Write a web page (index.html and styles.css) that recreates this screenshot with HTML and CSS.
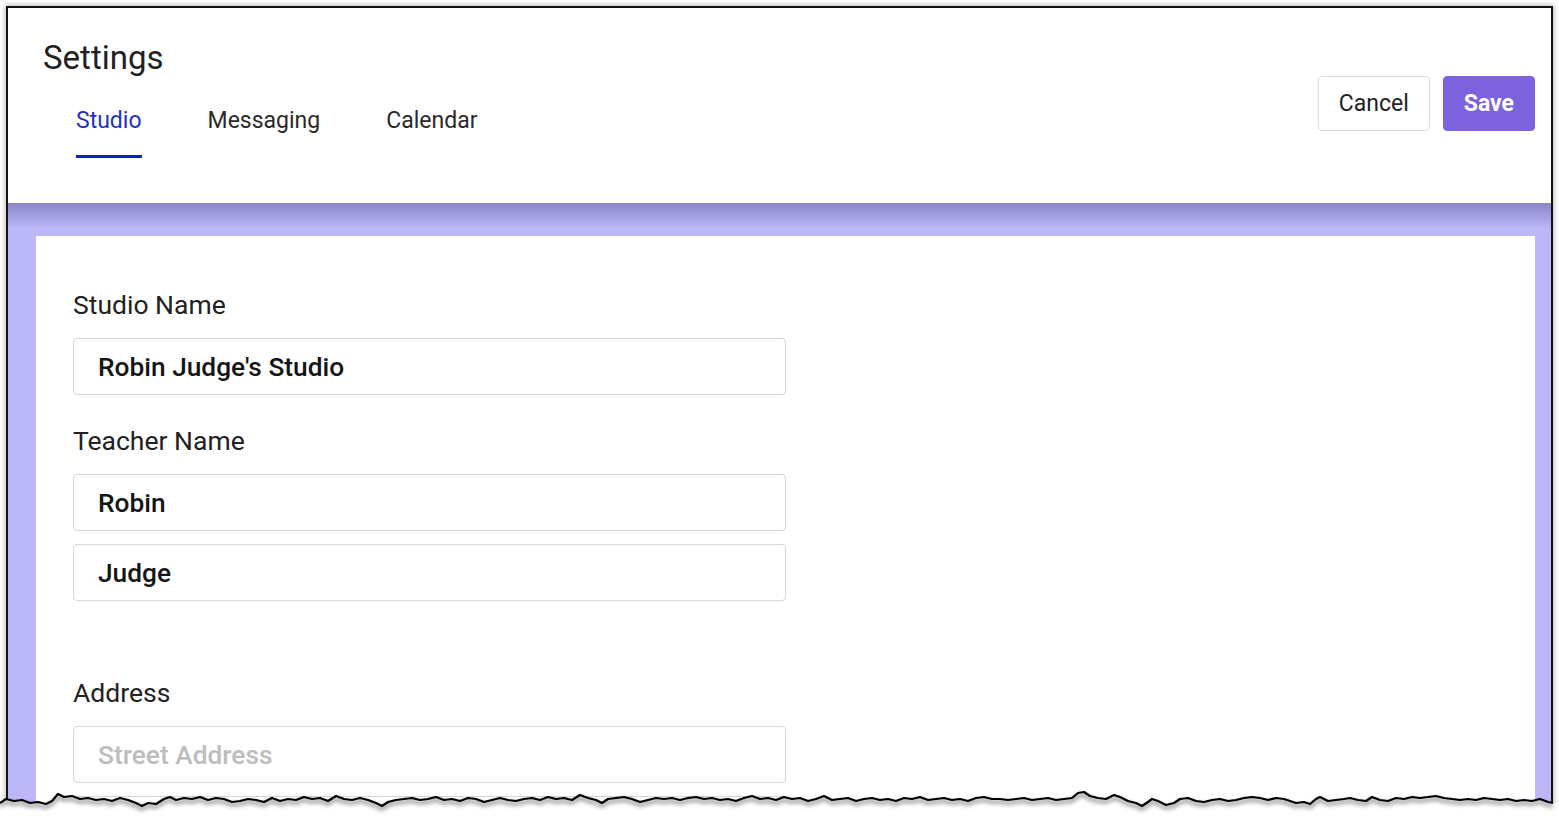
FILE: index.html
```html
<!DOCTYPE html>
<html lang="en">
<head>
<meta charset="utf-8">
<title>Settings</title>
<link rel="stylesheet" href="styles.css">
</head>
<body>
<div class="frame">
  <header class="header">
    <div class="header-left">
      <h1 class="title">Settings</h1>
      <nav class="tabs">
        <a class="tab active">Studio</a>
        <a class="tab">Messaging</a>
        <a class="tab">Calendar</a>
      </nav>
    </div>
    <div class="actions">
      <button class="btn btn-cancel">Cancel</button>
      <button class="btn btn-save">Save</button>
    </div>
  </header>
  <main class="body">
    <section class="card">
      <div class="field">
        <label class="label">Studio Name</label>
        <div class="input">Robin Judge's Studio</div>
      </div>
      <div class="field">
        <label class="label">Teacher Name</label>
        <div class="input">Robin</div>
        <div class="input">Judge</div>
      </div>
      <div class="field field-address">
        <label class="label">Address</label>
        <div class="input placeholder">Street Address</div>
        <div class="input placeholder"></div>
      </div>
    </section>
  </main>
</div>
<svg class="tear" width="1559" height="32" viewBox="0 0 1559 32" xmlns="http://www.w3.org/2000/svg">
  <defs>
    <filter id="blur" x="-5%" y="-50%" width="110%" height="200%">
      <feGaussianBlur stdDeviation="2"/>
    </filter>
  </defs>
  <polygon fill="#ffffff" points="0,17 6,13 14,15 22,14 30,17 38,16 46,18 52,15 58,8 64,11 72,10 80,13 88,12 96,14 104,13 112,15 120,12 128,14 136,17 142,20 148,17 156,18 164,13 170,11 176,14 184,12 192,13 200,11 208,14 216,12 224,13 232,16 240,15 248,13 256,14 264,16 272,12 280,15 288,13 296,14 304,11 312,13 320,12 328,15 336,10 344,13 352,14 360,12 368,14 376,17 382,20 388,16 396,14 404,13 412,12 420,14 428,13 436,11 444,14 452,13 460,15 468,12 476,13 484,16 492,14 500,12 508,14 516,15 524,13 532,12 540,14 548,11 556,13 564,12 572,14 580,9 588,12 596,14 602,17 608,13 616,12 624,11 632,13 640,16 648,14 656,12 664,13 672,12 680,14 688,12 696,11 704,13 712,12 720,14 728,13 736,15 744,12 752,10 760,13 768,12 776,14 784,11 792,13 800,12 808,15 816,13 824,10 832,14 840,13 848,12 856,15 864,13 872,12 880,14 888,13 896,15 904,12 912,13 920,11 928,14 936,13 944,12 952,14 960,13 968,15 976,12 984,11 992,13 1000,13 1008,14 1016,13 1024,12 1032,14 1040,13 1048,12 1056,14 1064,13 1072,12 1078,7 1084,6 1090,10 1098,12 1106,13 1114,9 1120,11 1128,15 1136,17 1142,20 1148,16 1152,13 1158,15 1166,19 1174,17 1180,13 1188,12 1196,15 1204,16 1212,14 1220,13 1228,15 1236,14 1244,12 1252,11 1260,12 1268,14 1276,12 1284,13 1290,15 1296,17 1304,16 1310,18 1316,13 1320,11 1328,15 1336,14 1344,13 1350,12 1358,14 1366,15 1372,11 1380,14 1388,15 1396,12 1404,13 1412,11 1420,12 1428,11 1436,10 1444,12 1452,13 1460,14 1468,13 1476,14 1484,12 1492,13 1500,14 1508,13 1516,15 1524,14 1532,15 1540,13 1548,16 1553,17 1559,17 1559,32 0,32"/>
  <polyline fill="none" stroke="#888" stroke-width="3" filter="url(#blur)" transform="translate(0,3)" points="0,17 6,13 14,15 22,14 30,17 38,16 46,18 52,15 58,8 64,11 72,10 80,13 88,12 96,14 104,13 112,15 120,12 128,14 136,17 142,20 148,17 156,18 164,13 170,11 176,14 184,12 192,13 200,11 208,14 216,12 224,13 232,16 240,15 248,13 256,14 264,16 272,12 280,15 288,13 296,14 304,11 312,13 320,12 328,15 336,10 344,13 352,14 360,12 368,14 376,17 382,20 388,16 396,14 404,13 412,12 420,14 428,13 436,11 444,14 452,13 460,15 468,12 476,13 484,16 492,14 500,12 508,14 516,15 524,13 532,12 540,14 548,11 556,13 564,12 572,14 580,9 588,12 596,14 602,17 608,13 616,12 624,11 632,13 640,16 648,14 656,12 664,13 672,12 680,14 688,12 696,11 704,13 712,12 720,14 728,13 736,15 744,12 752,10 760,13 768,12 776,14 784,11 792,13 800,12 808,15 816,13 824,10 832,14 840,13 848,12 856,15 864,13 872,12 880,14 888,13 896,15 904,12 912,13 920,11 928,14 936,13 944,12 952,14 960,13 968,15 976,12 984,11 992,13 1000,13 1008,14 1016,13 1024,12 1032,14 1040,13 1048,12 1056,14 1064,13 1072,12 1078,7 1084,6 1090,10 1098,12 1106,13 1114,9 1120,11 1128,15 1136,17 1142,20 1148,16 1152,13 1158,15 1166,19 1174,17 1180,13 1188,12 1196,15 1204,16 1212,14 1220,13 1228,15 1236,14 1244,12 1252,11 1260,12 1268,14 1276,12 1284,13 1290,15 1296,17 1304,16 1310,18 1316,13 1320,11 1328,15 1336,14 1344,13 1350,12 1358,14 1366,15 1372,11 1380,14 1388,15 1396,12 1404,13 1412,11 1420,12 1428,11 1436,10 1444,12 1452,13 1460,14 1468,13 1476,14 1484,12 1492,13 1500,14 1508,13 1516,15 1524,14 1532,15 1540,13 1548,16 1553,17"/>
  <polyline fill="none" stroke="#000" stroke-width="2.2" stroke-linejoin="round" points="0,17 6,13 14,15 22,14 30,17 38,16 46,18 52,15 58,8 64,11 72,10 80,13 88,12 96,14 104,13 112,15 120,12 128,14 136,17 142,20 148,17 156,18 164,13 170,11 176,14 184,12 192,13 200,11 208,14 216,12 224,13 232,16 240,15 248,13 256,14 264,16 272,12 280,15 288,13 296,14 304,11 312,13 320,12 328,15 336,10 344,13 352,14 360,12 368,14 376,17 382,20 388,16 396,14 404,13 412,12 420,14 428,13 436,11 444,14 452,13 460,15 468,12 476,13 484,16 492,14 500,12 508,14 516,15 524,13 532,12 540,14 548,11 556,13 564,12 572,14 580,9 588,12 596,14 602,17 608,13 616,12 624,11 632,13 640,16 648,14 656,12 664,13 672,12 680,14 688,12 696,11 704,13 712,12 720,14 728,13 736,15 744,12 752,10 760,13 768,12 776,14 784,11 792,13 800,12 808,15 816,13 824,10 832,14 840,13 848,12 856,15 864,13 872,12 880,14 888,13 896,15 904,12 912,13 920,11 928,14 936,13 944,12 952,14 960,13 968,15 976,12 984,11 992,13 1000,13 1008,14 1016,13 1024,12 1032,14 1040,13 1048,12 1056,14 1064,13 1072,12 1078,7 1084,6 1090,10 1098,12 1106,13 1114,9 1120,11 1128,15 1136,17 1142,20 1148,16 1152,13 1158,15 1166,19 1174,17 1180,13 1188,12 1196,15 1204,16 1212,14 1220,13 1228,15 1236,14 1244,12 1252,11 1260,12 1268,14 1276,12 1284,13 1290,15 1296,17 1304,16 1310,18 1316,13 1320,11 1328,15 1336,14 1344,13 1350,12 1358,14 1366,15 1372,11 1380,14 1388,15 1396,12 1404,13 1412,11 1420,12 1428,11 1436,10 1444,12 1452,13 1460,14 1468,13 1476,14 1484,12 1492,13 1500,14 1508,13 1516,15 1524,14 1532,15 1540,13 1548,16 1553,17"/>
</svg>
</body>
</html>
```

FILE: styles.css
```css
* { box-sizing: border-box; }

html, body {
  margin: 0;
  padding: 0;
  background: #ffffff;
  width: 1559px;
  height: 818px;
  overflow: hidden;
}

body {
  position: relative;
  font-family: Roboto, "Liberation Sans", Arial, sans-serif;
  color: #222;
}

.frame {
  margin: 6px 6px 0 6px;
  height: 812px;
  border: 2px solid #111;
  border-bottom: none;
  box-shadow: 0 0 5px 1px rgba(0, 0, 0, 0.28);
  overflow: hidden;
  display: flex;
  flex-direction: column;
  background: #fff;
}

.header {
  height: 195px;
  flex: none;
  display: flex;
  justify-content: space-between;
  align-items: flex-start;
  padding: 0 16px 0 35px;
  background: #fff;
}

.header-left {
  display: flex;
  flex-direction: column;
}

.title {
  margin: 30px 0 0 0;
  font-size: 33px;
  font-weight: 400;
  line-height: 39px;
  color: #222;
}

.tabs {
  display: flex;
  margin-top: 30px;
}

.tab {
  padding: 0 33px 0 33px;
  font-size: 23px;
  line-height: 27px;
  color: #2a2a2a;
  cursor: pointer;
}

.tab.active {
  color: #1f31c4;
}

.tab.active::after {
  content: "";
  display: block;
  height: 3px;
  margin-top: 21px;
  background: #0a22c0;
}

.actions {
  display: flex;
  gap: 13px;
  margin-top: 68px;
}

.btn {
  height: 55px;
  padding: 0 20px;
  font-family: Roboto, "Liberation Sans", Arial, sans-serif;
  font-size: 23px;
  border-radius: 4px;
  cursor: pointer;
}

.btn-cancel {
  background: #fff;
  border: 1px solid #dcdcdc;
  color: #222;
  font-weight: 400;
}

.btn-save {
  background: #7c62dc;
  border: 1px solid #7c62dc;
  color: #fff;
  font-weight: 700;
}

.body {
  flex: 1;
  padding: 33px 16px 0 28px;
  background: linear-gradient(#8a86c6 0px, #bcb8f8 26px, #bcb8f8 100%);
  display: flex;
}

.card {
  flex: 1;
  background: #fff;
  padding: 54px 37px 0 37px;
}

.field {
  display: flex;
  flex-direction: column;
  gap: 13px;
  margin-bottom: 31px;
}

.field-address {
  margin-top: 77px;
}

.label {
  font-size: 26.5px;
  line-height: 30px;
  color: #222;
  margin-bottom: 5px;
}

.input {
  width: 713px;
  height: 57px;
  border: 1px solid #d6d6d6;
  border-radius: 4px;
  padding: 0 24px;
  display: flex;
  align-items: center;
  font-size: 26.3px;
  font-weight: 500;
  color: #151515;
}

.input.placeholder {
  color: #bdbdbd;
}

.tear {
  position: absolute;
  left: 0;
  bottom: 0;
  display: block;
}
```
